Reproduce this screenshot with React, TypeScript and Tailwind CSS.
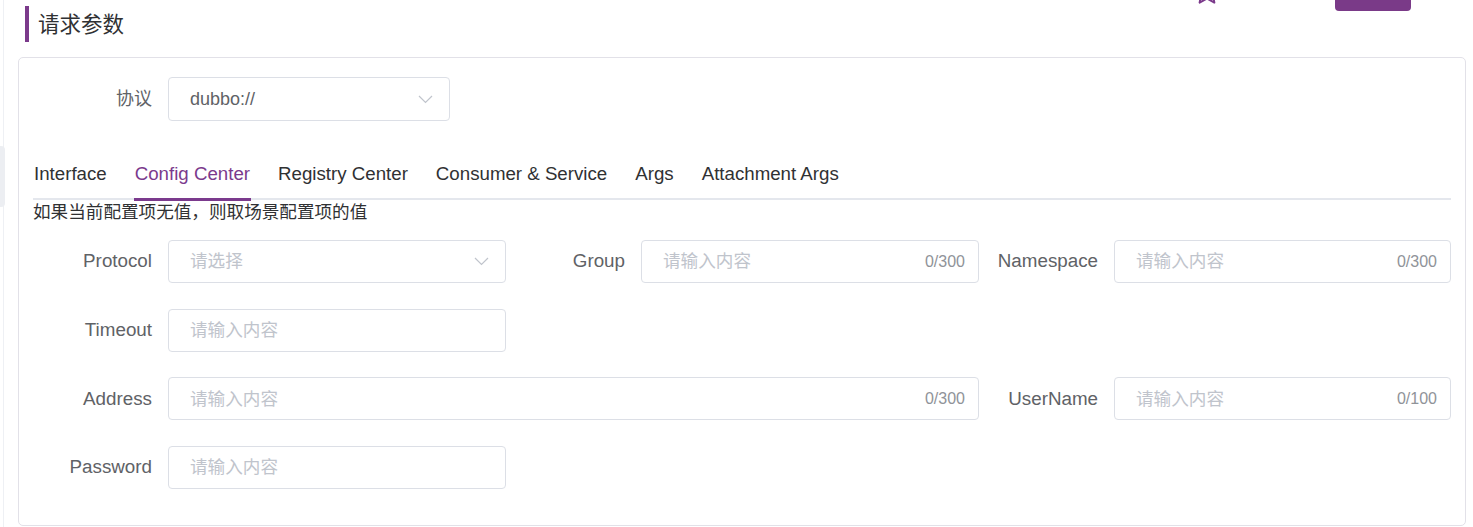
import React from "react";

const font = { fontFamily: '"Liberation Sans", "Noto Sans CJK SC", sans-serif' };

function Chevron({ className = "" }: { className?: string }) {
  return (
    <svg className={className} width="15" height="9" viewBox="0 0 15 9" fill="none">
      <path d="M1 1l6.5 6.5L14 1" stroke="#c0c4cc" strokeWidth="1.2" />
    </svg>
  );
}

function Label({ children }: { children: React.ReactNode }) {
  return (
    <div className="flex h-[43px] items-center justify-end pr-[16px] text-[18.8px] text-[#606266]">
      {children}
    </div>
  );
}

function TextInput({ counter, className = "" }: { counter?: string; className?: string }) {
  return (
    <div
      className={`flex h-[43px] items-center justify-between rounded-[4px] border border-[#dcdfe6] bg-white pl-[21px] pr-[13px] ${className}`}
    >
      <span className="text-[17.6px] text-[#c0c4cc]">请输入内容</span>
      {counter && <span className="text-[16px] text-[#909399]">{counter}</span>}
    </div>
  );
}

export default function App() {
  const tabs = ["Interface", "Config Center", "Registry Center", "Consumer & Service", "Args", "Attachment Args"];
  return (
    <div className="relative h-[527px] w-[1473px] overflow-hidden bg-white" style={font}>
      {/* left panel edge */}
      <div className="absolute left-0 top-0 h-full w-[4px] border-r border-[#eef0f4]" />
      <div className="absolute left-0 top-[146px] h-[61px] w-[5px] rounded-r-[4px] bg-[#eceef2]" />

      {/* cut-off header items */}
      <svg className="absolute left-[1192px] top-[-23px]" width="30" height="30" viewBox="0 0 24 24" fill="none">
        <path
          d="M12 2.5l2.9 6.1 6.6.8-4.9 4.5 1.3 6.6L12 17.2l-5.9 3.3 1.3-6.6-4.9-4.5 6.6-.8z"
          stroke="#7b3a8b"
          strokeWidth="1.6"
          strokeLinejoin="round"
        />
      </svg>
      <div className="absolute left-[1335px] top-[-20px] h-[31px] w-[76px] rounded-[4px] bg-[#7a3a88]" />

      <div className="pl-[18px] pr-[7px]">
        {/* title */}
        <div className="flex h-[57px] items-start">
          <div className="ml-[7px] mt-[6px] flex h-[36px] items-center">
            <div className="h-[36px] w-[4px] bg-[#7b3a8b]" />
            <span className="ml-[9px] mt-[2px] text-[21.5px] text-[#303133]">请求参数</span>
          </div>
        </div>

        {/* card */}
        <div className="h-[469px] rounded-[5px] border border-[#e2e1e8] px-[14px] pt-[19px]">
          {/* protocol */}
          <div className="flex">
            <div className="flex h-[44px] w-[135px] items-center justify-end pr-[16px] text-[18px] text-[#606266]">
              协议
            </div>
            <div className="flex h-[44px] w-[282px] items-center justify-between rounded-[4px] border border-[#dcdfe6] pl-[21px] pr-[16px]">
              <span className="text-[18px] text-[#606266]">dubbo://</span>
              <Chevron />
            </div>
          </div>

          {/* tabs */}
          <div className="mt-[40px] flex gap-[28px] border-b-2 border-[#e4e7ed] pl-[1px]">
            {tabs.map((t) => (
              <div
                key={t}
                className={`relative pb-[12px] pt-[1px] text-[18.7px] leading-[24px] ${
                  t === "Config Center" ? "text-[#7b3a8d]" : "text-[#303133]"
                }`}
              >
                {t}
                {t === "Config Center" && (
                  <div className="absolute bottom-[-3px] left-[-1px] right-[-1px] h-[3px] bg-[#7b3a8d]" />
                )}
              </div>
            ))}
          </div>
          <div className="text-[17.6px] leading-[24px] text-[#303133]">如果当前配置项无值，则取场景配置项的值</div>

          {/* form */}
          <div className="mt-[16px] grid grid-cols-[135px_338px_135px_338px_135px_337px] gap-y-[25.67px]">
            <Label>Protocol</Label>
            <div className="flex h-[43px] items-center justify-between rounded-[4px] border border-[#dcdfe6] pl-[21px] pr-[16px]">
              <span className="text-[17.6px] text-[#c0c4cc]">请选择</span>
              <Chevron />
            </div>
            <Label>Group</Label>
            <TextInput counter="0/300" />
            <Label>Namespace</Label>
            <TextInput counter="0/300" />

            <Label>Timeout</Label>
            <TextInput />
            <div className="col-span-4" />

            <Label>Address</Label>
            <TextInput counter="0/300" className="col-span-3" />
            <Label>UserName</Label>
            <TextInput counter="0/100" />

            <Label>Password</Label>
            <TextInput />
            <div className="col-span-4" />
          </div>
        </div>
      </div>
    </div>
  );
}
